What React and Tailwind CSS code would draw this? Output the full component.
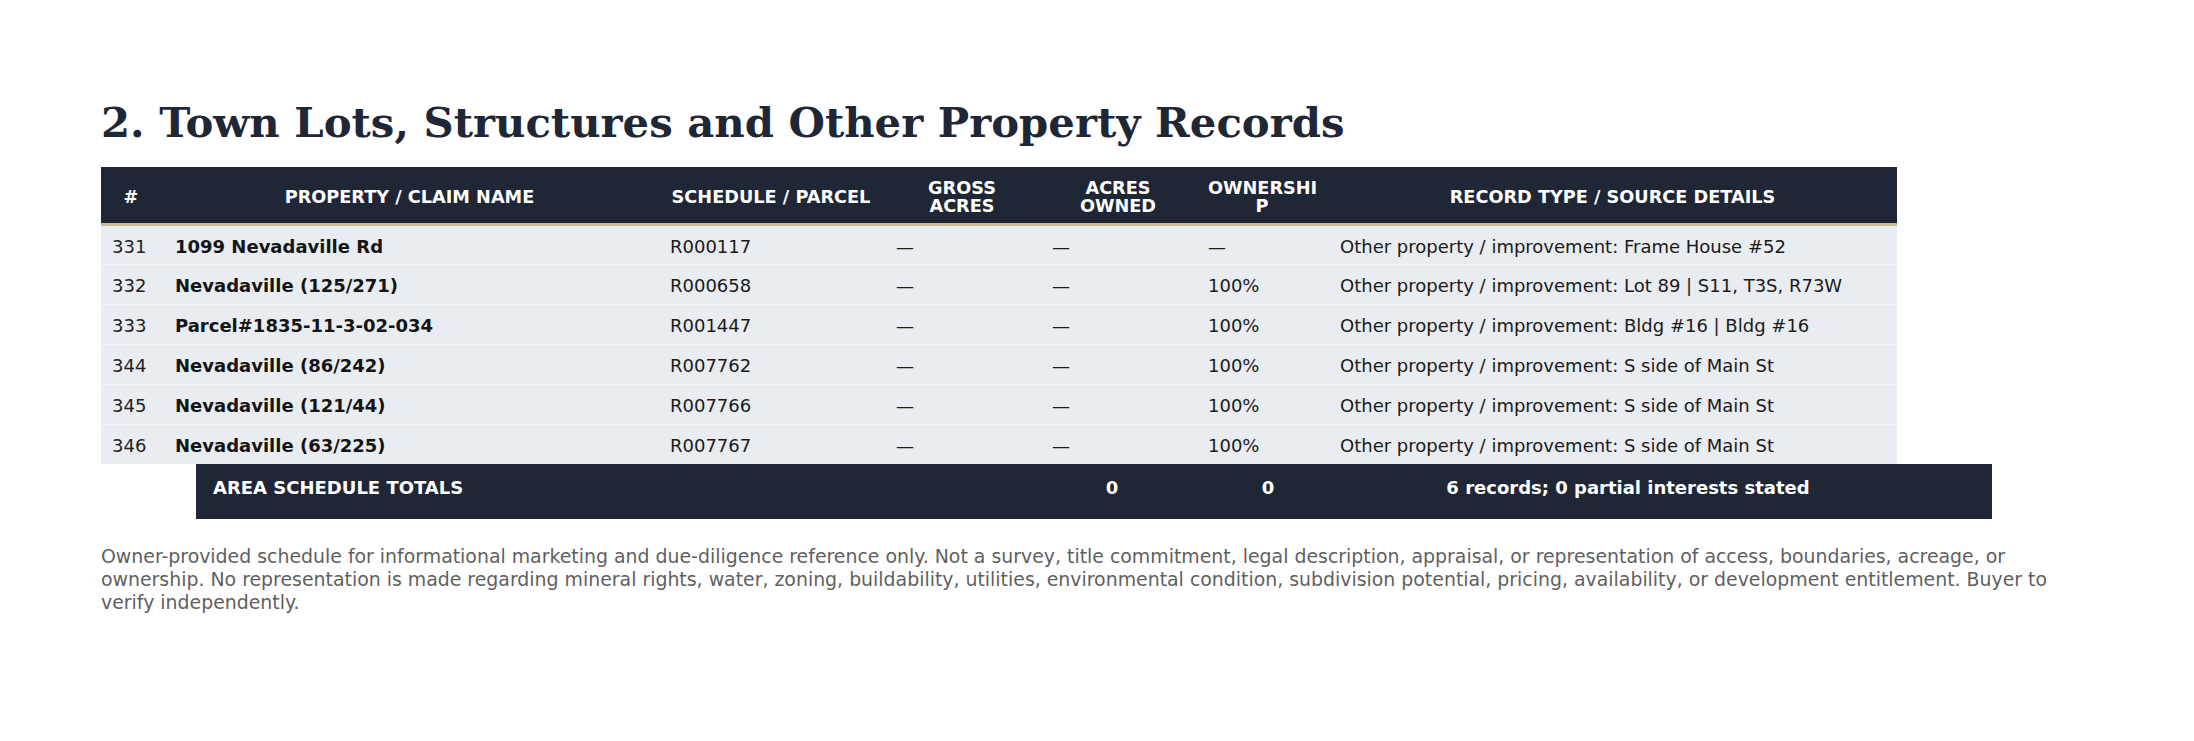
const rows = [
  { n: "331", name: "1099 Nevadaville Rd", parcel: "R000117", gross: "—", owned: "—", own: "—", detail: "Other property / improvement: Frame House #52" },
  { n: "332", name: "Nevadaville (125/271)", parcel: "R000658", gross: "—", owned: "—", own: "100%", detail: "Other property / improvement: Lot 89 | S11, T3S, R73W" },
  { n: "333", name: "Parcel#1835-11-3-02-034", parcel: "R001447", gross: "—", owned: "—", own: "100%", detail: "Other property / improvement: Bldg #16 | Bldg #16" },
  { n: "344", name: "Nevadaville (86/242)", parcel: "R007762", gross: "—", owned: "—", own: "100%", detail: "Other property / improvement: S side of Main St" },
  { n: "345", name: "Nevadaville (121/44)", parcel: "R007766", gross: "—", owned: "—", own: "100%", detail: "Other property / improvement: S side of Main St" },
  { n: "346", name: "Nevadaville (63/225)", parcel: "R007767", gross: "—", owned: "—", own: "100%", detail: "Other property / improvement: S side of Main St" },
];

const sans = { fontFamily: '"DejaVu Sans", Verdana, sans-serif' };

export default function App() {
  return (
    <div className="min-h-screen bg-white px-[101px] pt-[98px] text-[#1a1a1a]" style={sans}>
      <h1
        className="mb-[19px] text-[41.8px] font-bold leading-[1.2] text-[#1f2636]"
        style={{ fontFamily: '"DejaVu Serif", "Liberation Serif", serif' }}
      >
        2. Town Lots, Structures and Other Property Records
      </h1>

      <table className="w-[1796px] table-fixed border-collapse">
        <colgroup>
          <col className="w-[60px]" />
          <col className="w-[497px]" />
          <col className="w-[226px]" />
          <col className="w-[156px]" />
          <col className="w-[156px]" />
          <col className="w-[132px]" />
          <col className="w-[569px]" />
        </colgroup>
        <thead>
          <tr className="h-[57px] bg-[#1f2636] text-[17.7px] font-bold leading-[18.5px] text-white">
            <th className="border-b-[3px] border-[#cdb98f] px-3 pt-[5px] text-center">#</th>
            <th className="whitespace-nowrap border-b-[3px] border-[#cdb98f] px-3 pt-[5px] text-center">PROPERTY / CLAIM NAME</th>
            <th className="whitespace-nowrap border-b-[3px] border-[#cdb98f] px-3 pt-[5px] text-center">SCHEDULE / PARCEL</th>
            <th className="border-b-[3px] border-[#cdb98f] px-3 pt-[5px] text-center">GROSS<br />ACRES</th>
            <th className="border-b-[3px] border-[#cdb98f] px-3 pt-[5px] text-center">ACRES<br />OWNED</th>
            <th className="border-b-[3px] border-[#cdb98f] px-3 pt-[5px] text-center">OWNERSHI<br />P</th>
            <th className="whitespace-nowrap border-b-[3px] border-[#cdb98f] px-3 pt-[5px] text-center">RECORD TYPE / SOURCE DETAILS</th>
          </tr>
        </thead>
        <tbody className="text-[18px] leading-[22px]">
          {rows.map((r) => (
            <tr key={r.n} className="h-[40px] border-b border-[#f1f3f6] bg-[#e9ecf0] last:border-b-0">
              <td className="pl-[11px] pr-2 pt-[4px] text-[#222]">{r.n}</td>
              <td className="whitespace-nowrap px-[14px] pt-[4px] font-bold text-[#141414]">{r.name}</td>
              <td className="whitespace-nowrap px-3 pt-[4px]">{r.parcel}</td>
              <td className="px-3 pt-[4px]">{r.gross}</td>
              <td className="px-3 pt-[4px]">{r.owned}</td>
              <td className="px-3 pt-[4px]">{r.own}</td>
              <td className="whitespace-nowrap px-3 pt-[4px]">{r.detail}</td>
            </tr>
          ))}
        </tbody>
      </table>

      <div className="ml-[95px] grid h-[55px] w-[1796px] grid-cols-[838px_156px_156px_562px_1fr] bg-[#1f2636] pt-[13px] text-[18px] font-bold leading-[22px] text-white">
        <div className="pl-[17px]">AREA SCHEDULE TOTALS</div>
        <div className="text-center">0</div>
        <div className="text-center">0</div>
        <div className="whitespace-nowrap pl-[2px] text-center">6 records; 0 partial interests stated</div>
        <div />
      </div>

      <p className="mt-[26px] w-[1992px] text-[18.9px] leading-[23px] text-[#5f5f5f]">
        Owner-provided schedule for informational marketing and due-diligence reference only. Not a survey, title commitment, legal description, appraisal, or representation of access, boundaries, acreage, or ownership. No representation is made regarding mineral rights, water, zoning, buildability, utilities, environmental condition, subdivision potential, pricing, availability, or development entitlement. Buyer to verify independently.
      </p>
    </div>
  );
}
